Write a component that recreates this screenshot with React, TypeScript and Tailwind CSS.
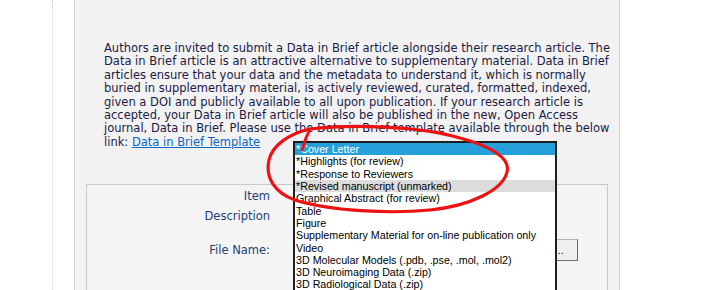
const paragraph = [
  "Authors are invited to submit a Data in Brief article alongside their research article. The",
  "Data in Brief article is an attractive alternative to supplementary material. Data in Brief",
  "articles ensure that your data and the metadata to understand it, which is normally",
  "buried in supplementary material, is actively reviewed, curated, formatted, indexed,",
  "given a DOI and publicly available to all upon publication. If your research article is",
  "accepted, your Data in Brief article will also be published in the new, Open Access",
  "journal, Data in Brief. Please use the Data in Brief template available through the below",
];

const itemTypes = [
  "*Cover Letter",
  "*Highlights (for review)",
  "*Response to Reviewers",
  "*Revised manuscript (unmarked)",
  "Graphical Abstract (for review)",
  "Table",
  "Figure",
  "Supplementary Material for on-line publication only",
  "Video",
  "3D Molecular Models (.pdb, .pse, .mol, .mol2)",
  "3D Neuroimaging Data (.zip)",
  "3D Radiological Data (.zip)",
];

export default function App() {
  return (
    <div className="relative flex h-[290px] w-[714px] overflow-hidden bg-white font-['DejaVu_Sans',sans-serif]">
      {/* left gutter with dotted rule */}
      <div className="h-full w-[53px] shrink-0 border-r border-dotted border-[#cfcfcf]" />
      <div className="w-[21px] shrink-0" />

      {/* main grey panel */}
      <div className="h-full w-[546px] shrink-0 border-x border-[#d0d0d0] bg-[#f2f2f2]">
        <div className="pl-[29px] pt-[42px] text-[11.5px] leading-[13.4px] text-[#1b1b46]">
          {paragraph.map((line) => (
            <div key={line} className="whitespace-nowrap">
              {line}
            </div>
          ))}
          <div className="whitespace-nowrap">
            link:{" "}
            <a href="#" className="text-[#0b68c4] underline">
              Data in Brief Template
            </a>
          </div>
        </div>

        {/* upload fieldset */}
        <div className="mx-[11px] mt-[35px] h-[140px] border border-[#c8c8c8] bg-[#f4f4f4] pt-px text-[11.5px] text-[#1f3f75]">
          <div className="flex h-[20px] items-center">
            <div className="w-[183px] text-right">Item</div>
          </div>
          <div className="flex h-[20px] items-center">
            <div className="w-[183px] text-right">Description</div>
          </div>
          <div className="mt-[13px] flex h-[22px] items-center">
            <div className="w-[183px] text-right">File Name:</div>
            <div className="flex-1" />
            <button className="mr-[29px] h-[22px] w-[74px] border border-[#b4b4b4] border-b-[#6d6d6d] border-r-[#6d6d6d] bg-[#efefef] font-['Liberation_Sans',sans-serif] text-[11px] text-black">
              Browse...
            </button>
          </div>
        </div>
      </div>

      {/* open item type list */}
      <div className="absolute left-[293px] top-[141px] w-[264px] border-2 border-[#1e1e1e] bg-white font-['Liberation_Sans',sans-serif] text-[10.7px] text-black">
        {itemTypes.map((t, i) => (
          <div
            key={t}
            className={
              i === 0
                ? "flex h-[12.3px] items-center whitespace-nowrap bg-[#26a0da] pl-px text-white"
                : i === 3
                ? "flex h-[12.3px] items-center whitespace-nowrap bg-[#dcdcdc] pl-px"
                : "flex h-[12.3px] items-center whitespace-nowrap pl-px"
            }
          >
            {t}
          </div>
        ))}
      </div>

      {/* hand-drawn red annotation */}
      <svg
        className="pointer-events-none absolute left-0 top-0"
        width="714"
        height="290"
        viewBox="0 0 714 290"
        fill="none"
      >
        <path
          d="M302 150 L306 138 L310 129"
          stroke="#ee1111"
          strokeWidth="3"
          strokeLinecap="round"
        />
        <path
          d="M310 129 C350 124 420 126 460 138 C490 146 511 158 507 172 C503 190 470 206 430 210 C390 214 330 211 295 200 C275 193 265 178 269 160 C272 146 288 134 310 129"
          stroke="#ee1111"
          strokeWidth="3.2"
          strokeLinecap="round"
          strokeLinejoin="round"
        />
      </svg>
    </div>
  );
}
